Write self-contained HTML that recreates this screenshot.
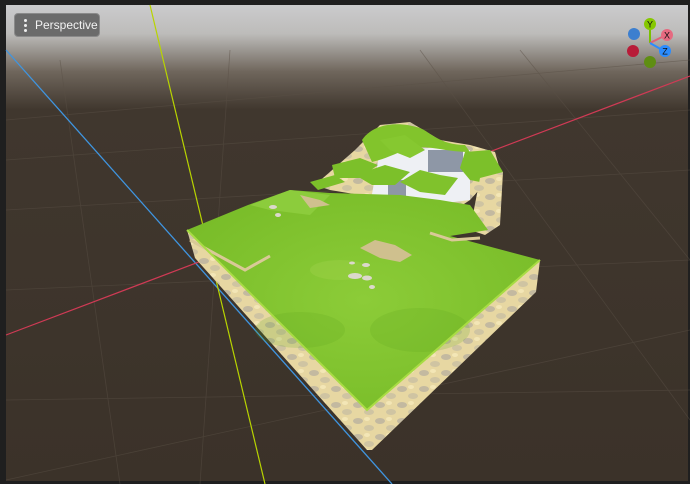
<!DOCTYPE html>
<html><head><meta charset="utf-8"><style>
html,body{margin:0;padding:0;width:690px;height:484px;overflow:hidden;background:#1f1f1f}
svg{position:absolute;left:0;top:0}
.btn{position:absolute;left:14px;top:13px;width:86px;height:24px;background:#6b6b6b;border-radius:4px;border:1px solid #8a8a8a;box-sizing:border-box;color:#f2f2f2;font:12px "Liberation Sans",sans-serif;line-height:22px}
.btn span{position:absolute;left:20px}
.d{position:absolute;left:9px;width:3px;height:3px;border-radius:50%;background:#eee}
</style></head><body>
<svg width="690" height="484" viewBox="0 0 690 484">
<defs>
<linearGradient id="sky" x1="0" y1="0" x2="0" y2="1">
<stop offset="0" stop-color="#cbcbcd"/><stop offset="0.06" stop-color="#bdbcba"/><stop offset="0.14" stop-color="#6f665c"/><stop offset="0.22" stop-color="#40372e"/><stop offset="1" stop-color="#3b3229"/>
</linearGradient>
<radialGradient id="gr" cx="0.5" cy="0.5" r="0.6">
<stop offset="0" stop-color="#8ccc38"/><stop offset="1" stop-color="#78bc28"/></radialGradient>
<pattern id="rock" width="22" height="16" patternUnits="userSpaceOnUse">
<rect width="22" height="16" fill="#e7d7a2"/>
<ellipse cx="6" cy="5" rx="5" ry="3" fill="#c3b9a0"/><ellipse cx="17" cy="12" rx="5" ry="3" fill="#cfc4a2"/><ellipse cx="15" cy="3" rx="3" ry="2" fill="#f3e6b6"/>
</pattern>
</defs>
<rect x="6" y="5" width="682" height="476" fill="url(#sky)"/>
<g stroke="#5a5046" stroke-width="0.8" opacity="0.5">
<line x1="6" y1="120" x2="690" y2="60"/><line x1="6" y1="160" x2="690" y2="110"/><line x1="6" y1="210" x2="690" y2="170"/><line x1="6" y1="290" x2="690" y2="260"/><line x1="6" y1="400" x2="690" y2="390"/>
<line x1="60" y1="60" x2="120" y2="484"/><line x1="230" y1="50" x2="200" y2="484"/><line x1="420" y1="50" x2="690" y2="420"/><line x1="520" y1="50" x2="690" y2="260"/>
<line x1="6" y1="480" x2="690" y2="330"/>
</g>
<line x1="6" y1="50" x2="392" y2="484" stroke="#3f95e0" stroke-width="1.3"/>
<line x1="150" y1="5" x2="265" y2="484" stroke="#b8d400" stroke-width="1.2"/>
<line x1="6" y1="335" x2="690" y2="76" stroke="#d03a55" stroke-width="1.2"/>
<!-- back hills -->
<polygon points="355,150 380,125 410,122 440,140 470,145 495,152 500,170 488,180 470,200 455,210 420,208 395,205 360,195 330,190 315,185" fill="url(#rock)"/>
<polygon points="380,150 430,148 470,150 470,200 430,205 370,205" fill="#eef0f4"/>
<rect x="428" y="150" width="35" height="22" fill="#8e97a6"/>
<rect x="388" y="180" width="18" height="18" fill="#8e97a6"/>
<path d="M362,140 C372,125 395,120 420,128 C430,132 440,145 465,145 L470,152 C445,152 430,145 415,148 C400,150 390,158 372,162 Z" fill="#82c42c"/>
<path d="M380,140 L405,135 L425,150 L410,158 L390,150 Z" fill="#86c830"/>
<path d="M332,165 L360,158 L378,165 L360,178 L335,178 Z" fill="#7cc02a"/>
<path d="M355,175 L385,165 L410,172 L395,185 L372,185 Z" fill="#7cc02a"/>
<path d="M400,182 L420,170 L440,175 L458,178 L445,195 L420,192 Z" fill="#80c22c"/>
<path d="M465,152 L490,150 L503,172 L495,185 L470,180 L460,168 Z" fill="#7cc02a"/>
<path d="M310,182 L335,175 L345,182 L318,190 Z" fill="#7cc02a"/>
<polygon points="480,178 503,172 500,225 485,235 470,230" fill="url(#rock)"/>
<!-- sides -->
<polygon points="187,230 367,410 367,450 195,258" fill="url(#rock)"/>
<polygon points="367,410 540,260 536,292 372,450 367,450" fill="url(#rock)"/>
<!-- grass top -->
<polygon points="187,230 248,205 290,190 330,193 400,195 440,200 470,205 488,230 450,236 540,260 367,410" fill="url(#gr)"/>
<polygon points="250,205 290,190 330,195 310,215 270,210" fill="#8ccc3c"/>
<ellipse cx="300" cy="330" rx="45" ry="18" fill="#5ea51e" opacity="0.2"/>
<ellipse cx="420" cy="330" rx="50" ry="22" fill="#5ea51e" opacity="0.2"/>
<ellipse cx="340" cy="270" rx="30" ry="10" fill="#a2d44c" opacity="0.35"/>
<path d="M360,248 L375,240 L395,245 L412,255 L400,262 L380,258 Z" fill="#cfc08e"/>
<path d="M300,195 L320,200 L330,205 L310,208 Z" fill="#cfc08e"/>
<g fill="#dcd8cc"><ellipse cx="355" cy="276" rx="7" ry="3"/><ellipse cx="367" cy="278" rx="5" ry="2.5"/><ellipse cx="372" cy="287" rx="3" ry="2"/><ellipse cx="352" cy="263" rx="3" ry="1.5"/><ellipse cx="366" cy="265" rx="4" ry="2"/><ellipse cx="273" cy="207" rx="4" ry="2"/><ellipse cx="278" cy="215" rx="3" ry="2"/></g>
<path d="M190,240 L245,270 L270,256" stroke="#d9c997" stroke-width="3" fill="none"/>
<path d="M430,233 L452,240 L480,238" stroke="#d9c997" stroke-width="3" fill="none"/>
<path d="M187,230 L367,410 L540,260" stroke="#a8dc44" stroke-width="2" fill="none"/>
</svg>
<div class="btn"><i class="d" style="top:5px"></i><i class="d" style="top:10px"></i><i class="d" style="top:15px"></i><span>Perspective</span></div>
<svg width="690" height="484" viewBox="0 0 690 484">
<line x1="650" y1="43" x2="650" y2="26" stroke="#7ac000" stroke-width="2"/>
<line x1="650" y1="43" x2="666" y2="35" stroke="#e06078" stroke-width="2"/>
<line x1="650" y1="43" x2="664" y2="51" stroke="#2a8cff" stroke-width="2"/>
<circle cx="634" cy="34" r="6" fill="#3d7fcf"/>
<circle cx="633" cy="51" r="6" fill="#b81c38"/>
<circle cx="650" cy="62" r="6" fill="#5f8e12"/>
<circle cx="650" cy="24" r="6" fill="#86c800"/>
<circle cx="667" cy="35" r="6" fill="#e66a80"/>
<circle cx="665" cy="51" r="6" fill="#2a8cff"/>
<g font-family="Liberation Sans,sans-serif" font-size="9" fill="#111" text-anchor="middle">
<text x="650" y="27.5">Y</text><text x="667" y="38.5">X</text><text x="665" y="54.5">Z</text></g>
</svg>
</body></html>
